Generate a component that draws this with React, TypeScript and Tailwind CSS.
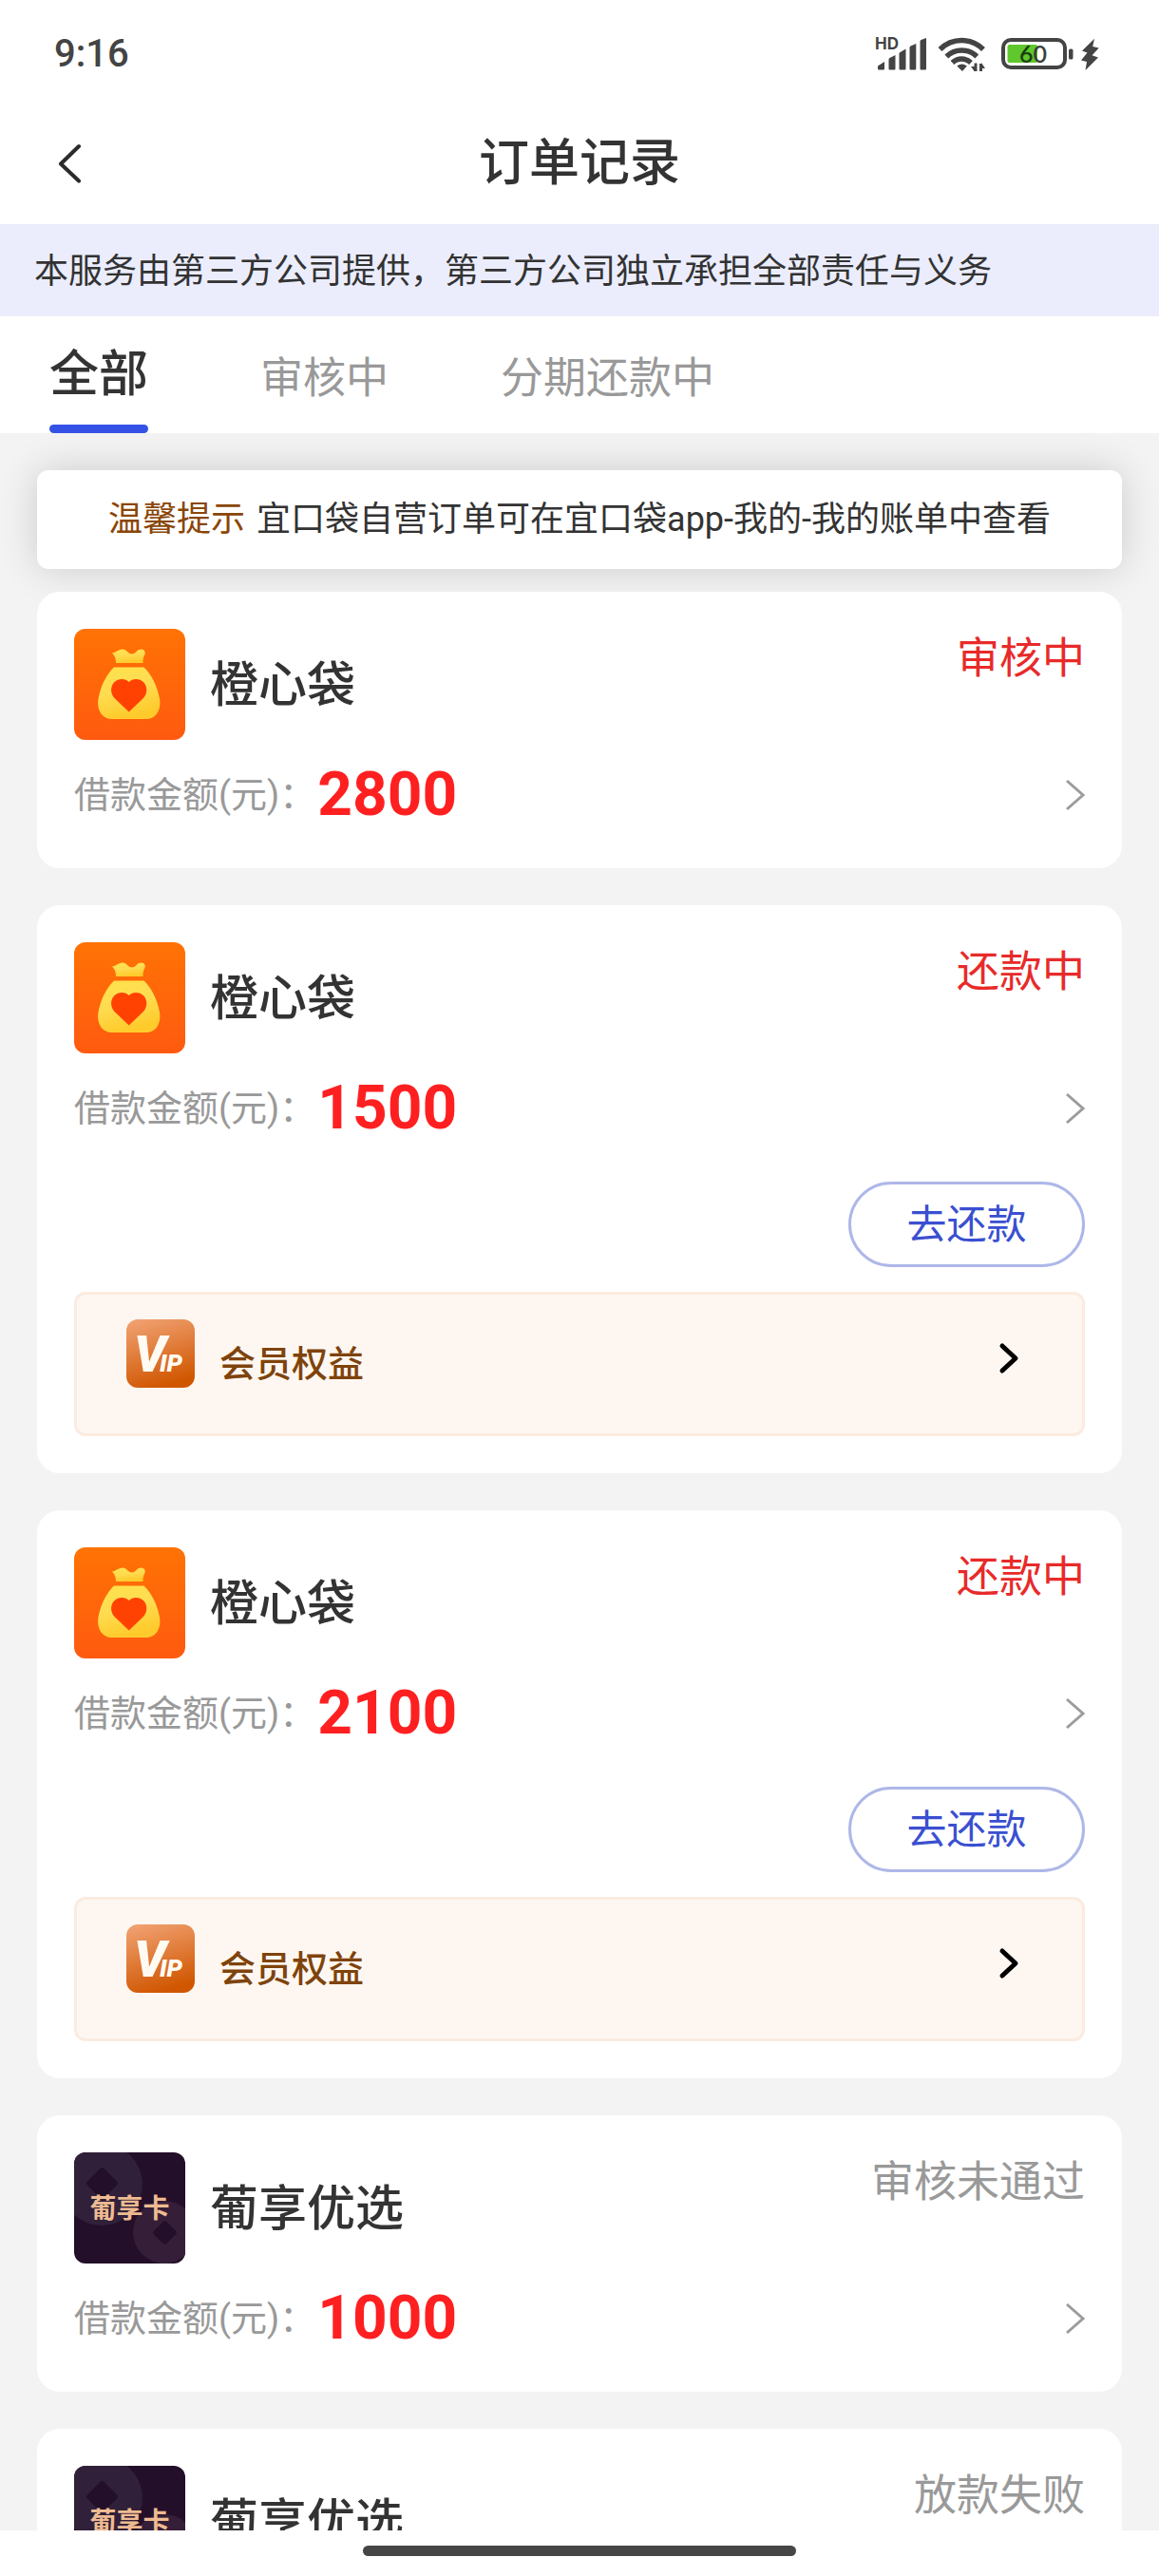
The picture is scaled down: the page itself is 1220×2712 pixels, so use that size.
import { useState } from "react";

type Brand = "orange" | "grape";

interface Order {
  id: number;
  brand: Brand;
  name: string;
  amount: number;
  status: string;
  active: boolean;
  repayable?: boolean;
}

const tabs = ["全部", "审核中", "分期还款中"];

const orders: Order[] = [
  { id: 1, brand: "orange", name: "橙心袋", amount: 2800, status: "审核中", active: true },
  { id: 2, brand: "orange", name: "橙心袋", amount: 1500, status: "还款中", active: true, repayable: true },
  { id: 3, brand: "orange", name: "橙心袋", amount: 2100, status: "还款中", active: true, repayable: true },
  { id: 4, brand: "grape", name: "葡享优选", amount: 1000, status: "审核未通过", active: false },
  { id: 5, brand: "grape", name: "葡享优选", amount: 1000, status: "放款失败", active: false },
];

export default function App() {
  const [tab, setTab] = useState(tabs[0]);

  return (
    <div
      lang="zh-CN"
      className="flex h-screen flex-col bg-[#f3f3f3] font-['Roboto','Noto_Sans_CJK_SC',sans-serif] text-[#333333]"
    >
      <StatusBar />

      <header className="grid h-[132px] shrink-0 grid-cols-[1fr_auto_1fr] items-center bg-white px-[60px] pt-1">
        <button aria-label="返回" className="flex h-16 w-16 items-center">
          <svg viewBox="0 0 27 42" className="h-[42px] w-[27px]" fill="none" stroke="#2b2b2b" strokeWidth="4" strokeLinecap="round" strokeLinejoin="round">
            <path d="M23 3 4 21.500l19 18" />
          </svg>
        </button>
        <h1 className="text-[53px] leading-[64px] font-medium">订单记录</h1>
      </header>

      <p className="shrink-0 bg-[#ebedfd] px-9 pt-1 text-[36px] leading-[93px] whitespace-nowrap">
        本服务由第三方公司提供，第三方公司独立承担全部责任与义务
      </p>

      <nav className="relative z-10 flex h-[123px] shrink-0 gap-[118px] bg-white px-[52px]">
        {tabs.map((t) => (
          <button
            key={t}
            onClick={() => setTab(t)}
            className={
              t === tab
                ? "flex flex-col justify-between pt-6 text-[52px] leading-[76px] font-medium"
                : "flex flex-col justify-between pt-7 text-[45px] leading-[76px] text-[#999999]"
            }
          >
            {t}
            {t === tab && <span className="h-[9px] w-full rounded-full bg-[#3453e6]" />}
          </button>
        ))}
      </nav>

      <main className="flex min-h-0 flex-1 flex-col overflow-y-auto px-[39px] pt-[39px] [scrollbar-width:none]">
        <p className="shrink-0 rounded-xl bg-white text-center text-[36px] leading-[104px] whitespace-nowrap shadow-[0_0_40px_rgba(0,0,0,0.16)]">
          <span className="mr-3 text-[#8a4608]">温馨提示</span>
          宜口袋自营订单可在宜口袋app-我的-我的账单中查看
        </p>

        <ul className="mt-6 flex flex-col gap-[39px]">
          {orders.map((order) => (
            <OrderCard key={order.id} order={order} />
          ))}
        </ul>
      </main>

      <footer className="flex h-12 shrink-0 justify-center bg-white pt-4">
        <span className="h-[11px] w-[456px] rounded-full bg-[#464646]" />
      </footer>
    </div>
  );
}

function OrderCard({ order }: { order: Order }) {
  return (
    <li className="rounded-3xl bg-white p-[39px]">
      <div className="flex h-[117px]">
        {order.brand === "orange" ? <OrangeLogo /> : <GrapeLogo />}
        <h2 className="ml-[26px] flex-1 text-[51px] leading-[120px] font-medium">{order.name}</h2>
        <span
          className={
            order.active
              ? "text-[45px] leading-[64px] text-[#e82a2a]"
              : "text-[45px] leading-[64px] text-[#999999]"
          }
        >
          {order.status}
        </span>
      </div>

      <a href="#order" className="mt-5 flex h-[76px] items-center">
        <span className="mr-[2px] text-[38px] text-[#999999]">借款金额(元)：</span>
        <span className="text-[64px] leading-[76px] font-bold text-[#fe2021]">{order.amount}</span>
        <svg viewBox="0 0 20 34" className="ml-auto h-[34px] w-5" fill="none" stroke="#9c9c9c" strokeWidth="3">
          <path d="M1 2 18 17 1 32" />
        </svg>
      </a>

      {order.repayable && (
        <>
          <div className="mt-[39px] flex justify-end">
            <button className="h-[90px] w-[249px] rounded-full border-3 border-[#adb7e8] text-[42px] text-[#3a4fd0]">
              去还款
            </button>
          </div>
          <a
            href="#vip"
            className="mt-[26px] flex h-[152px] items-start rounded-xl border-3 border-[#fbebe0] bg-[#fef7f1] px-[52px] pt-[26px]"
          >
            <VipIcon />
            <span className="ml-[26px] flex-1 text-[38px] leading-[94px] font-medium text-[#7f430c]">会员权益</span>
            <svg viewBox="0 0 22 34" className="mt-6 mr-[14px] h-[34px] w-[22px]" fill="none" stroke="#000" strokeWidth="5" strokeLinecap="round" strokeLinejoin="round">
              <path d="M4 4 18 17 4 30" />
            </svg>
          </a>
        </>
      )}
    </li>
  );
}

function StatusBar() {
  return (
    <div className="flex h-[104px] shrink-0 items-center justify-between bg-white pr-[63px] pl-[57px] pt-[10px] text-[#444444]">
      <time className="text-[40px] leading-[48px] font-medium">9:16</time>
      <div className="flex items-center">
        <svg viewBox="-4 -3 58 44" className="h-11 w-[58px]" fill="currentColor">
          <text x="-1" y="14" fontSize="17" fontWeight="700" fontFamily="Inter">HD</text>
          <path d="M2 31.500l7-4.500v7.500q0 1-1 1H3q-1 0-1-1zM13.500 24.500q0-1 1-1.500l6-3v14.500q0 1-1 1h-5q-1 0-1-1zM24.500 18.500q0-1 1-1.500l6-3.500v21q0 1-1 1h-5q-1 0-1-1zM35.500 12q0-1 1-1.500l5.800-2.500v26.500q0 1-1 1h-4.800q-1 0-1-1zM46.500 5.500q0-1 1-1.500l5.500-2v32.500q0 1-1 1h-4.500q-1 0-1-1z" />
        </svg>
        <svg viewBox="0 0 52 38" className="ml-[10px] h-[38px] w-[52px]" fill="none" stroke="currentColor" strokeWidth="5.500">
          <path d="M3.500 14a32 32 0 0 1 45.500 0M10.300 21.500a23 23 0 0 1 32 0M16.500 28a14 14 0 0 1 19.500 0" />
          <path d="M21.300 31.500a8.500 8.500 0 0 1 10.500 0L27 37z" fill="currentColor" stroke="none" />
          <path d="M41 28.500V37M46.500 37v-8" strokeWidth="3" />
          <path d="M36 32h4v5.500zM47 28l4 6h-4z" fill="currentColor" stroke="none" />
        </svg>
        <svg viewBox="0 0 77 38" className="ml-4 h-[38px] w-[77px]">
          <rect x="2" y="4" width="65" height="29" rx="8" fill="none" stroke="currentColor" strokeWidth="4" />
          <rect x="6.500" y="9" width="31.500" height="19" rx="2" fill="#5fc82c" />
          <rect x="71" y="13.500" width="4.500" height="11" rx="1.500" fill="currentColor" />
          <text x="33.500" y="27.500" fontSize="25" textAnchor="middle" fontFamily="Lato" fontWeight="600" fill="#1c4010">
            6<tspan fill="#3a3f38">0</tspan>
          </text>
        </svg>
        <svg viewBox="0 0 20 38" className="ml-[6px] h-[38px] w-5" fill="currentColor">
          <path d="M15 2.700 2 15.500 7.500 17.500 1 25.500l6 1.500-1.500 9L19 22.500l-6.500-2.200L19.700 12.500l-6.500-1.500z" />
        </svg>
      </div>
    </div>
  );
}

function OrangeLogo() {
  return (
    <svg viewBox="0 0 117 117" className="size-[117px] rounded-xl" aria-hidden="true">
      <defs>
        <linearGradient id="orangeBg" x1="0" y1="0" x2="0" y2="1">
          <stop offset="0" stopColor="#ff7304" />
          <stop offset="1" stopColor="#ff5a10" />
        </linearGradient>
        <linearGradient id="bag" x1="0" y1="0" x2="0.3" y2="1">
          <stop offset="0" stopColor="#ffe24a" />
          <stop offset="0.5" stopColor="#fedc52" />
          <stop offset="1" stopColor="#ffcb2c" />
        </linearGradient>
      </defs>
      <rect width="117" height="117" fill="url(#orangeBg)" />
      <path
        d="M40 25.500c4-.500 7-4 11-4 4.500 0 5.500 5 10 5 4 0 5-5 9.500-5 3.500 0 5.500 3 3.500 6.500-1.500 3-1.500 5-1.500 8H44c0-4.500-1-7.500-4-10.500z"
        fill="url(#bag)"
      />
      <path
        d="M42 40.500h31.500c8 7.500 14 20 16.500 33 2 12-4 21.500-14 21.500H39.500c-10 0-16-9.500-14-21.500C28 60 34 48 42 40.500z"
        fill="url(#bag)"
      />
      <path
        d="M57.700 56C54 52 46.500 52 42 56.500 37.500 61.500 38.500 69 43 73.500l14.700 14 14.700-14c4.500-4.500 5.500-12 1-17C69 52 61.500 52 57.700 56z"
        fill="#ff4202"
      />
    </svg>
  );
}

function GrapeLogo() {
  return (
    <svg viewBox="0 0 117 117" className="size-[117px] rounded-xl" aria-hidden="true">
      <rect width="117" height="117" fill="#230f29" />
      <circle cx="29" cy="34" r="43" fill="#312039" />
      <circle cx="95" cy="84" r="33" fill="#351f38" />
      <rect x="17" y="20" width="25" height="25" rx="3" transform="rotate(45 29.500 32.500)" fill="#230f29" />
      <rect x="86" y="75" width="19" height="19" rx="3" transform="rotate(45 95.500 84.500)" fill="#230f29" />
      <text x="58.500" y="69" fontSize="28" fontWeight="700" textAnchor="middle" fill="#eebb91">葡享卡</text>
    </svg>
  );
}

function VipIcon() {
  return (
    <svg viewBox="0 0 72 72" className="size-[72px] rounded-xl" aria-hidden="true">
      <defs>
        <linearGradient id="vipBg" x1="0.2" y1="0" x2="0.5" y2="1">
          <stop offset="0" stopColor="#f0a070" />
          <stop offset="1" stopColor="#d05600" />
        </linearGradient>
      </defs>
      <rect width="72" height="72" fill="url(#vipBg)" />
      <text x="8" y="55" fontSize="53" fill="#fffaf2" fontFamily="Roboto" fontWeight="900" fontStyle="italic">
        V<tspan x="35" fontSize="26">IP</tspan>
      </text>
    </svg>
  );
}
